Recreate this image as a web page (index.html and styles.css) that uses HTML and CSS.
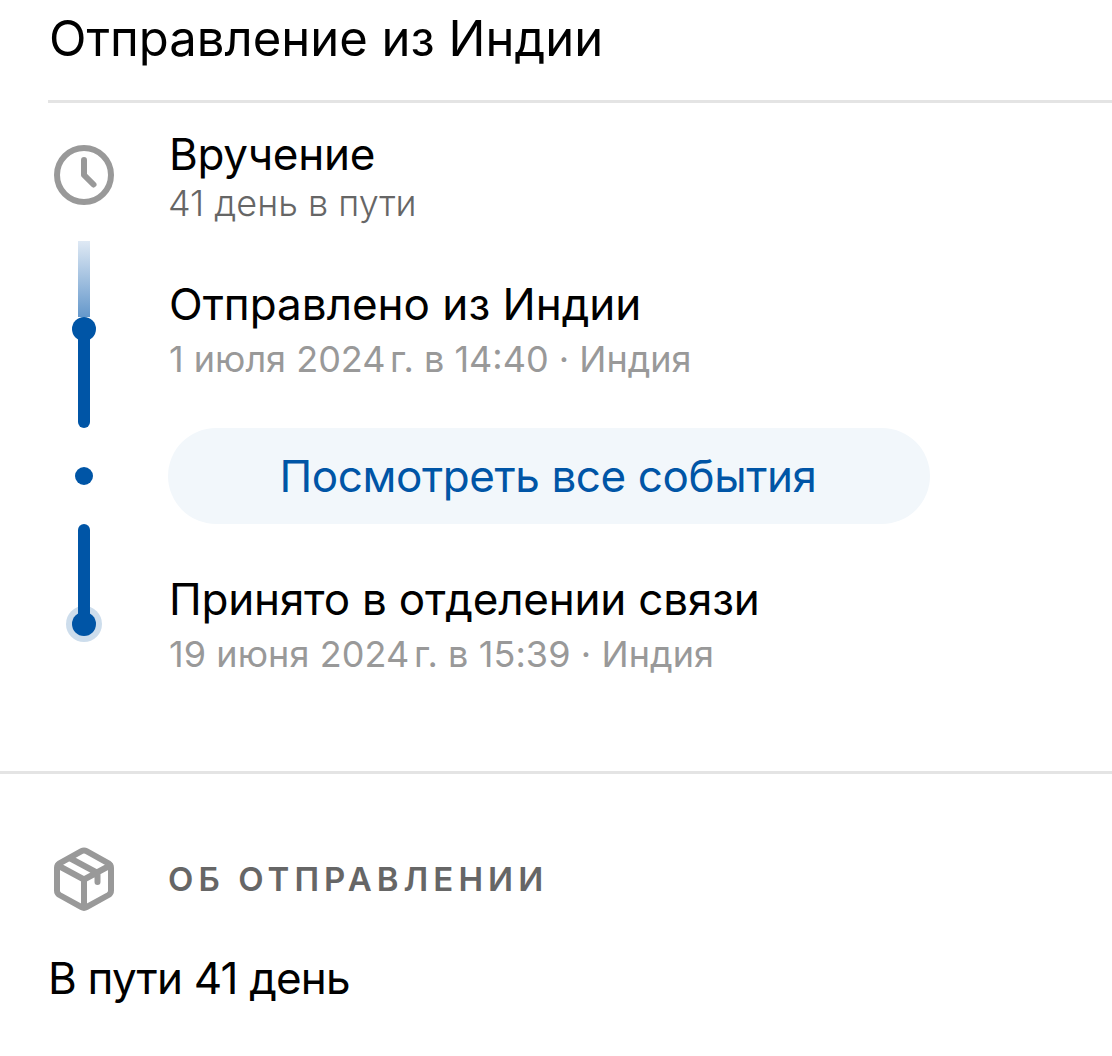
FILE: index.html
```html
<!DOCTYPE html>
<html lang="ru">
<head>
<meta charset="utf-8">
<title>Отправление из Индии</title>
<link rel="stylesheet" href="styles.css">
</head>
<body>
<header class="header"><h1 class="title">Отправление из Индии</h1></header>
<main>
  <section class="timeline">
    <div class="row row-pending">
      <div class="rail">
        <svg class="clock" width="60" height="60" viewBox="0 0 60 60"><circle cx="30" cy="30" r="27"/><path d="M30 15v15l9.5 9.5"/></svg>
      </div>
      <div class="info">
        <h2 class="event event-pending">Вручение</h2>
        <p class="transit">41 день в пути</p>
      </div>
    </div>
    <div class="row row-sent">
      <div class="rail">
        <span class="fade"></span><span class="dot"></span><span class="line line-down"></span>
      </div>
      <div class="info">
        <h2 class="event event-sent">Отправлено из Индии</h2>
        <p class="date">1 июля 2024<span class="thin">&#8239;</span>г. в 14:40 · Индия</p>
      </div>
    </div>
    <div class="row row-more">
      <div class="rail"><span class="dot dot-small"></span></div>
      <button class="more" type="button">Посмотреть все события</button>
    </div>
    <div class="row row-accepted">
      <div class="rail">
        <span class="line line-up"></span><span class="dot dot-ring"></span>
      </div>
      <div class="info">
        <h2 class="event event-accepted">Принято в отделении связи</h2>
        <p class="date">19 июня 2024<span class="thin">&#8239;</span>г. в 15:39 · Индия</p>
      </div>
    </div>
  </section>
  <section class="about">
    <div class="about-head">
      <svg class="box" width="72" height="72" viewBox="48 843 72 72"><path d="M81.5 851.2 59.5 863.4Q57 865 57 868V890.5Q57 893.500 59.500 895L81.500 907.200Q84 908.600 86.500 907.200L108.500 895Q111 893.500 111 890.500V868Q111 865 108.500 863.400L86.500 851.200Q84 849.800 81.500 851.200Z"/><path d="M58 865.500 84 879.500 110 865.500M84 879.500V907M70.500 858.500 97.500 873V882"/></svg>
      <h2 class="caption">ОБ ОТПРАВЛЕНИИ</h2>
    </div>
    <p class="days">В пути 41 день</p>
  </section>
</main>
</body>
</html>
```

FILE: styles.css
```css
* { box-sizing: border-box; }
body { margin: 0; background: #fff; color: #000; font-family: Inter, "Liberation Sans", sans-serif; }
h1, h2, p { margin: 0; font-weight: 400; white-space: nowrap; }
.header { height: 103px; margin-left: 48px; padding: 9px 0 0 1px; border-bottom: 3px solid #e4e4e4; }
.title { font-size: 49px; line-height: 60px; }
.timeline { height: 671px; border-bottom: 3px solid #e4e4e4; }
.row { display: grid; grid-template-columns: 72px 1fr; column-gap: 48px; padding-left: 48px; }
.row-pending { height: 138px; }
.row-sent { height: 187px; }
.row-more { height: 96px; }
.rail { display: flex; flex-direction: column; align-items: center; }
.row-pending .rail { padding-top: 42px; }
.row-pending .info { padding-top: 25px; }
.row-sent .info { padding-top: 37px; }
.row-accepted .info { padding-top: 49px; }
.row-more .rail { justify-content: center; }
.clock, .box { fill: none; stroke: #999; stroke-width: 6; stroke-linecap: round; stroke-linejoin: round; }
.event { padding-left: 1px; font-size: 44px; line-height: 52px; }
.event-pending { letter-spacing: -0.25px; }
.event-accepted { letter-spacing: -0.2px; }
.transit { margin-top: 2px; font-size: 36px; line-height: 42px; font-weight: 300; color: #666; }
.date { margin-top: 8px; padding-left: 1px; font-size: 36px; line-height: 42px; letter-spacing: 0.08px; color: #999; }
.row-sent .date { letter-spacing: 0; }
.thin { margin-right: -2px; }
.fade { width: 12px; height: 76px; background: linear-gradient(#dfe9f4, #6598cb); }
.dot { width: 24px; height: 24px; border-radius: 50%; background: #0055a6; }
.dot-small { width: 18px; height: 18px; }
.dot-ring { margin-top: -4px; box-shadow: 0 0 0 6px #cdddec; }
.line { position: relative; width: 12px; background: #0055a6; }
.line-down { height: 93px; margin-top: -6px; border-radius: 0 0 6px 6px; }
.line-up { z-index: 1; height: 92px; border-radius: 6px 6px 0 0; }
.more { width: 762px; height: 96px; padding: 0 2px 0 0; border: 0; border-radius: 48px; background: #f2f7fb; color: #0055a6; font: 400 44px/52px Inter, "Liberation Sans", sans-serif; letter-spacing: -0.4px; }
.about { padding: 69px 48px 0; }
.about-head { display: flex; align-items: center; gap: 48px; height: 72px; }
.caption { margin-top: -1px; font-size: 33px; line-height: 40px; font-weight: 570; letter-spacing: 5.05px; color: #666; }
.days { margin-top: 37px; font-size: 44px; line-height: 52px; letter-spacing: -0.8px; }
```
